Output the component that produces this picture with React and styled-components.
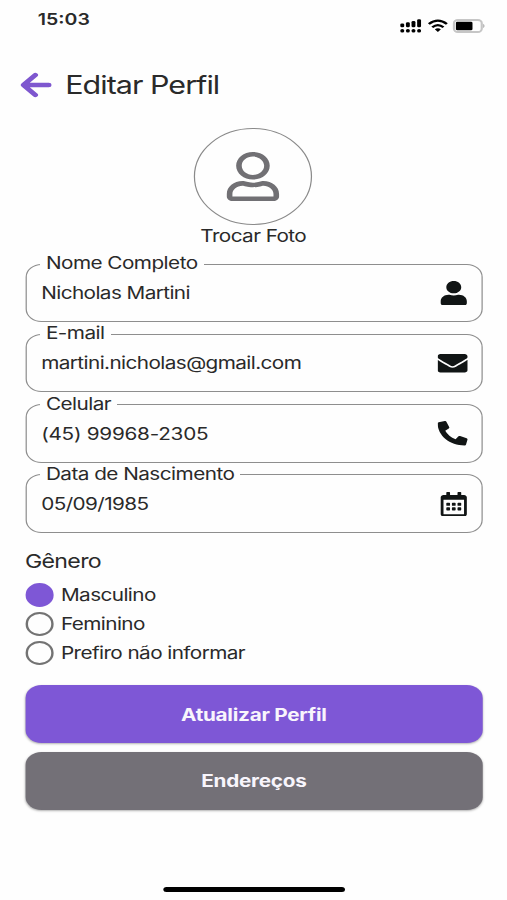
import React from 'react';
import styled, { createGlobalStyle } from 'styled-components';
import { FaUser, FaRegUser, FaEnvelope, FaPhoneAlt, FaRegCalendarAlt } from 'react-icons/fa';

const GlobalStyle = createGlobalStyle`
    * {
        box-sizing: border-box;
    }
    body {
        margin: 0;
        background: #fefefe;
        overflow: hidden;
    }
`;

const Screen = styled.div`
    display: flex;
    flex-direction: column;
    width: 416px;
    height: 900px;
    padding: 0 20px 0 20.5px;
    transform: scaleX(1.219);
    transform-origin: 0 0;
    background: #fefefe;
    color: #2a2a2a;
    font-family: Inter, 'Liberation Sans', sans-serif;
`;

const StatusBar = styled.div`
    display: flex;
    justify-content: space-between;
    height: 60px;
    padding: 8px 0 0 10.5px;
`;

const Time = styled.span`
    font-size: 16px;
    line-height: 22px;
    font-weight: 600;
`;

const StatusIcons = styled.svg`
    width: 72px;
    height: 18px;
    margin: 9px -2px 0 0;
`;

const Header = styled.header`
    display: flex;
    align-items: center;
    height: 50px;
    margin-left: -4.7px;
`;

const BackArrow = styled.svg`
    width: 28px;
    height: 30px;
    cursor: pointer;
`;

const Title = styled.h1`
    margin: 0 0 0 9.7px;
    font-size: 25px;
    line-height: 32px;
    font-weight: 400;
    letter-spacing: -0.8px;
    white-space: nowrap;
`;

const Photo = styled.div`
    display: flex;
    flex-direction: column;
    align-items: center;
    height: 144px;
    margin-left: -1px;
    padding-top: 18px;
`;

const Avatar = styled.div`
    display: flex;
    align-items: center;
    justify-content: center;
    width: 97px;
    height: 97px;
    border: 1px solid #8a8a8a;
    border-radius: 50%;
    color: #717074;
`;

const Label = styled.span`
    font-size: 17px;
    line-height: 22px;
    letter-spacing: ${props => props.$spacing || '-0.48px'};
    white-space: nowrap;
`;

const Fields = styled.div`
    display: flex;
    flex-direction: column;
    gap: 2.3px;
`;

const Field = styled.fieldset`
    min-width: 0;
    height: 68px;
    margin: 0;
    padding: 0 11.5px;
    border: 1px solid #8e8e8e;
    border-radius: 13px;
`;

const Legend = styled.legend`
    height: 20px;
    padding: 0 5px 0 4.7px;
    font-size: 17px;
    line-height: 19px;
    letter-spacing: -0.44px;
`;

const FieldRow = styled.div`
    display: flex;
    align-items: center;
    justify-content: space-between;
    height: 38px;
    padding-left: 0.8px;
`;

const FieldIcon = styled.span`
    display: flex;
    margin-right: ${props => props.$narrow ? '-1.3px' : '0'};
    color: #111515;
`;

const Gender = styled.div`
    display: flex;
    flex-direction: column;
    height: 152.5px;
    padding-top: 17.6px;
`;

const GenderTitle = styled.div`
    height: 30px;
    font-size: 19px;
    line-height: 24px;
    letter-spacing: -0.58px;
`;

const Option = styled.div`
    display: flex;
    align-items: center;
    gap: 6px;
    height: 29.2px;
    cursor: pointer;
`;

const Radio = styled.span`
    width: 23.5px;
    height: 24px;
    border: 2px solid ${props => props.$checked ? '#7e57d6' : '#737373'};
    border-radius: 50%;
    background: ${props => props.$checked ? '#7e57d6' : 'transparent'};
`;

const Button = styled.button`
    flex: none;
    height: 58px;
    margin: 0 0 8.5px;
    padding: 1px 6px 0;
    border: 0;
    border-radius: 13px;
    background: ${props => props.$color};
    box-shadow: 0 1px 2px rgba(0, 0, 0, 0.3);
    color: #f8f5fc;
    font-family: inherit;
    font-size: 17px;
    font-weight: 700;
    letter-spacing: -0.22px;
    cursor: pointer;
`;

const HomeBar = styled.div`
    width: 149px;
    height: 5px;
    margin: auto auto 8px;
    border-radius: 3px;
    background: #000;
`;

const fields = [
    { label: 'Nome Completo', value: 'Nicholas Martini', icon: <FaUser size={24.5} />, narrow: true },
    { label: 'E-mail', value: 'martini.nicholas@gmail.com', icon: <FaEnvelope size={24.5} /> },
    { label: 'Celular', value: '(45) 99968-2305', icon: <FaPhoneAlt size={24.5} />, spacing: '-0.22px' },
    { label: 'Data de Nascimento', value: '05/09/1985', icon: <FaRegCalendarAlt size={24.5} />, narrow: true },
];

const genders = ['Masculino', 'Feminino', 'Prefiro não informar'];

class App extends React.Component {
    constructor(props) {
        super(props);
        this.state = {
            gender: 'Masculino'
        }
    }
    render() {
        return (
            <Screen>
                <GlobalStyle />
                <StatusBar>
                    <Time>15:03</Time>
                    <StatusIcons viewBox="0 0 72 18">
                        <g fill="#000">
                            <rect x="2.4" y="6.5" width="3.2" height="3.8" rx="1.2" />
                            <rect x="7" y="5.3" width="3.2" height="5" rx="1.2" />
                            <rect x="11.6" y="4" width="3.2" height="6.3" rx="1.2" />
                            <rect x="16.2" y="2.3" width="3.2" height="8" rx="1.2" />
                            <rect x="2.4" y="12" width="3.2" height="3.6" rx="1.5" />
                            <rect x="7" y="12" width="3.2" height="3.6" rx="1.5" />
                            <rect x="11.6" y="12" width="3.2" height="3.6" rx="1.5" />
                            <rect x="16.2" y="12" width="3.2" height="3.6" rx="1.5" />
                        </g>
                        <g fill="none" stroke="#000" strokeWidth="2.2">
                            <path d="M25.8 7 Q33.2 0.2 40.6 7" />
                            <path d="M28.6 10.2 Q33.2 5.9 37.8 10.2" />
                        </g>
                        <path d="M30.7 12.3 Q33.2 10.3 35.7 12.3 L33.2 14.9 Z" />
                        <rect x="46.4" y="3" width="22.8" height="12" rx="3.2" fill="#fff" stroke="#c6c6c6" strokeWidth="1.8" />
                        <rect x="48" y="4.7" width="13.6" height="8.6" rx="1.2" />
                        <path d="M70.2 6.8 Q73 9 70.2 11.2 Z" fill="#bbb" />
                    </StatusIcons>
                </StatusBar>
                <Header>
                    <BackArrow viewBox="0 0 28 30">
                        <path
                            d="M13 5 L3.2 15 L13 25 M3.8 15 H24"
                            fill="none"
                            stroke="#7e57cf"
                            strokeWidth="4.4"
                            strokeLinecap="round"
                            strokeLinejoin="round"
                        />
                    </BackArrow>
                    <Title>Editar Perfil</Title>
                </Header>
                <Photo>
                    <Avatar>
                        <FaRegUser size={49} />
                    </Avatar>
                    <Label>Trocar Foto</Label>
                </Photo>
                <Fields>
                    {fields.map(field => (
                        <Field key={field.label}>
                            <Legend>{field.label}</Legend>
                            <FieldRow>
                                <Label $spacing={field.spacing}>{field.value}</Label>
                                <FieldIcon $narrow={field.narrow}>{field.icon}</FieldIcon>
                            </FieldRow>
                        </Field>
                    ))}
                </Fields>
                <Gender>
                    <GenderTitle>Gênero</GenderTitle>
                    {genders.map(gender => (
                        <Option key={gender} onClick={() => this.setState({ gender })}>
                            <Radio $checked={this.state.gender === gender} />
                            <Label>{gender}</Label>
                        </Option>
                    ))}
                </Gender>
                <Button $color="#7e57d6">Atualizar Perfil</Button>
                <Button $color="#737077">Endereços</Button>
                <HomeBar />
            </Screen>
        )
    }
}

export default App
